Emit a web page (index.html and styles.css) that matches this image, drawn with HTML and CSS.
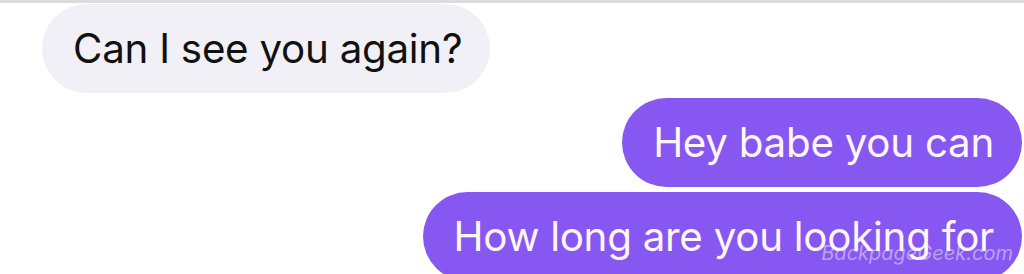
FILE: index.html
```html
<!DOCTYPE html>
<html lang="en">
<head>
  <meta charset="UTF-8" />
  <meta name="viewport" content="width=device-width, initial-scale=1.0" />
  <title>Messages</title>
  <link rel="stylesheet" href="styles.css">
</head>
<body>

  <section class="thread">
    <div class="bubble incoming">Can I see you again?</div>
    <div class="bubble outgoing">Hey babe you can</div>
    <div class="bubble outgoing last">
      How long are you looking for
      <span class="watermark">BackpageGeek.com</span>
    </div>
  </section>

</body>
</html>
```

FILE: styles.css
```css
body {
  font-family: Inter, 'Liberation Sans', sans-serif;
  background: #ffffff;
  margin: 0;
  height: 274px;
  overflow: hidden;
}

.thread {
  display: flex;
  flex-direction: column;
  gap: 5px;
  border-top: 3px solid #dcdcde;
  padding: 1px 2px 0 42px;
}

.bubble {
  display: flex;
  align-items: center;
  height: 89px;
  padding: 0 28px 0 31px;
  border-radius: 45px;
  font-size: 40.3px;
  letter-spacing: -0.25px;
  white-space: nowrap;
  box-sizing: border-box;
}

.incoming {
  align-self: flex-start;
  background: #f1f0f6;
  color: #111111;
}

.outgoing {
  align-self: flex-end;
  background: #8657f1;
  color: #fff6fc;
}

.last {
  position: relative;
}

.watermark {
  position: absolute;
  right: 9px;
  top: 49px;
  font-size: 20px;
  font-style: italic;
  letter-spacing: 0;
  color: rgba(255, 255, 255, 0.45);
}
```
